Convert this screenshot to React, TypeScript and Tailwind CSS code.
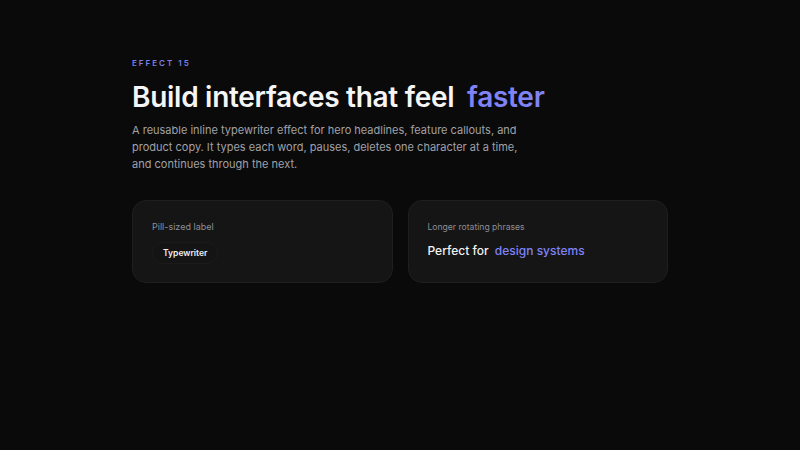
import React from "react"

const font = { fontFamily: "Inter, 'Noto Sans', sans-serif" }

export default function App() {
  return (
    <div className="min-h-[450px] w-full bg-[#0a0a0a] text-white" style={font}>
      <div className="mx-auto w-[536px] pt-[57px]">
        {/* eyebrow */}
        <div className="text-[8px] font-semibold uppercase leading-[12px] tracking-[0.25em] text-[#7d7fe6]">Effect 15</div>

        {/* headline */}
        <h1 className="mt-[11px] text-[28px] font-semibold leading-[34px] tracking-[-0.01em] text-[#f5f5f5]">
          Build interfaces that feel <span className="ml-[6px] text-[#7f83f5]">faster</span>
        </h1>

        <p className="mt-[8px] w-[400px] text-[11px] leading-[17px] text-[#a1a1a8]">
          A reusable inline typewriter effect for hero headlines, feature callouts, and product copy. It types each word, pauses, deletes one character at a time, and continues through the next.
        </p>

        {/* cards */}
        <div className="mt-[27px] grid grid-cols-2 gap-[15px]">
          <div className="h-[83px] rounded-[14px] border border-[#1f1f1f] bg-[#151515] px-[19px] pt-[20px]">
            <div className="text-[9px] leading-[12px] text-[#8e8e93]">Pill-sized label</div>
            <div className="mt-[9px] inline-flex h-[22px] items-center rounded-full border border-[#1b1b1b] bg-[#141414] px-[10px] text-[8.5px] font-semibold text-[#f0f0f0]">
              Typewriter
            </div>
          </div>
          <div className="h-[83px] rounded-[14px] border border-[#1f1f1f] bg-[#151515] px-[19px] pt-[20px]">
            <div className="text-[8.6px] leading-[12px] text-[#8e8e93]">Longer rotating phrases</div>
            <div className="mt-[9px] text-[12px] font-medium leading-[18px] text-[#f2f2f2]">
              Perfect for <span className="ml-[3px] text-[#7f83f5]">design systems</span>
            </div>
          </div>
        </div>
      </div>
    </div>
  )
}
